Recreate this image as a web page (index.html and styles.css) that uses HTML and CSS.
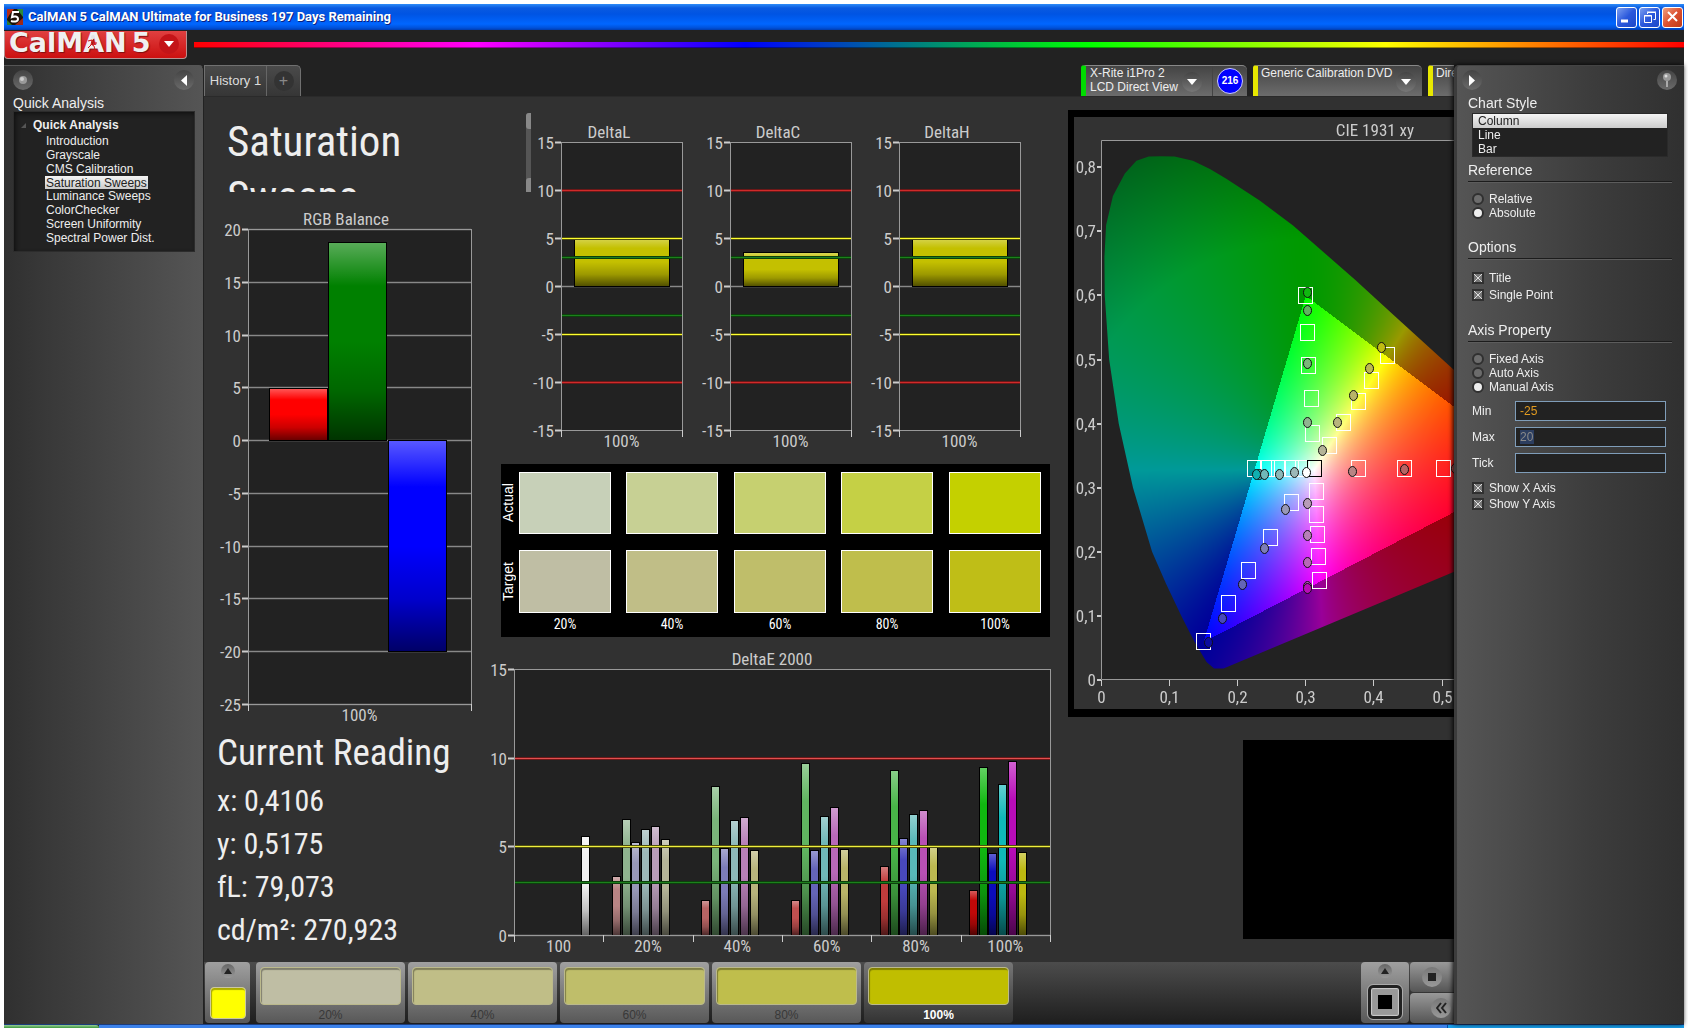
FILE: index.html
```html
<!DOCTYPE html>
<html lang="en">
<head>
<meta charset="utf-8">
<title>CalMAN 5</title>
<link rel="stylesheet" href="styles.css">
</head>
<body>
<div class="window">
  <header class="titlebar">
    <svg class="app-icon" width="16" height="16" viewBox="0 0 16 16" aria-hidden="true">
      <rect width="16" height="16" fill="#1c1208"/><path d="M0 0h7L3 5l-3 5z" fill="#b22a18"/><path d="M10 0h6v8z" fill="#2a8a3a"/><path d="M16 9v7H8z" fill="#a02818"/><path d="M0 11l5 5H0z" fill="#2f7a30"/>
      <path d="M12 3H6L5 8c2-1 6-1 6 2s-4 3-7 2" fill="none" stroke="#fff" stroke-width="2"/>
    </svg>
    <span class="titlebar-text">CalMAN 5 CalMAN Ultimate for Business 197 Days Remaining</span>
    <div class="window-buttons">
      <button class="wbtn" aria-label="Minimize"><svg width="20" height="20"><path d="M4 14h7" stroke="#fff" stroke-width="3"/></svg></button>
      <button class="wbtn" aria-label="Restore"><svg width="20" height="20" fill="none" stroke="#fff"><path d="M7.5 7V5.500h8v7h-2M7 5h9"/><path d="M4.500 8.500h7v7h-7zM4 9h8"/></svg></button>
      <button class="wbtn close" aria-label="Close"><svg width="20" height="20"><path d="M5 5l9 9M14 5l-9 9" stroke="#fff" stroke-width="2"/></svg></button>
    </div>
  </header>

  <div class="brandbar">
    <button class="logo" aria-label="CalMAN 5 menu">
      <span class="logo-word">CalMAN</span><span class="logo-word">5</span>
      <svg class="runner" width="14" height="18" viewBox="0 0 14 18" aria-hidden="true"><circle cx="8" cy="4" r="2" fill="#e4e4e4"/><path d="M3 8l4-1 2 3 3 0M7 7l-1 5-3 3M6 11l3 2 1 4" fill="none" stroke="#c8161a" stroke-width="1"/></svg>
      <span class="logo-drop"><svg width="10" height="6"><path d="M0 0h10L5 6z" fill="#fff"/></svg></span>
    </button>
    <div class="rainbow"></div>
  </div>

  <div class="body">
    <aside class="sidebar">
      <div class="side-tools">
        <button class="round" aria-label="Pin"><svg width="8" height="8"><circle cx="4" cy="4" r="4" fill="#999"/><circle cx="3" cy="3" r="2" fill="#ccc"/></svg></button>
        <button class="round" aria-label="Collapse"><svg width="6" height="11"><path d="M6 0v11L0 5.500z" fill="#fff"/></svg></button>
      </div>
      <h2 class="heading">Quick Analysis</h2>
      <nav class="tree">
        <div class="tree-root"><svg width="5" height="5"><path d="M5 0v5H0z" fill="#555"/></svg>Quick Analysis</div>
        <a href="#">Introduction</a>
        <a href="#">Grayscale</a>
        <a href="#">CMS Calibration</a>
        <a href="#" class="current">Saturation Sweeps</a>
        <a href="#">Luminance Sweeps</a>
        <a href="#">ColorChecker</a>
        <a href="#">Screen Uniformity</a>
        <a href="#">Spectral Power Dist.</a>
      </nav>
    </aside>

    <main class="main">
      <div class="tabs">
        <div class="history"><button class="history-tab">History 1</button><button class="history-add" aria-label="Add history"><span>+</span></button></div>
        <div class="devices">
          <div class="device meter"><span class="device-name">X-Rite i1Pro 2<br>LCD Direct View</span><button class="drop" aria-label="Meter menu"><svg width="10" height="6"><path d="M0 0h10L5 6z" fill="#fff"/></svg></button><span class="counter-cell"><span class="counter">216</span></span></div>
          <div class="device source"><span class="device-name">Generic Calibration DVD</span><button class="drop" aria-label="Source menu"><svg width="10" height="6"><path d="M0 0h10L5 6z" fill="#fff"/></svg></button></div>
          <div class="device display"><span class="device-name">Direct Display Control</span></div>
        </div>
      </div>

      <div class="stage">
        <section class="col-left">
          <div class="title-box"><h1>Saturation Sweeps</h1><span class="mini-scroll"><i></i><i></i></span></div>
          <svg class="chart" id="rgb" width="285" height="520" role="img" aria-label="RGB Balance"></svg>
          <div class="reading">
            <h2>Current Reading</h2>
            <p>x: 0,4106</p><p>y: 0,5175</p><p>fL: 79,073</p><p>cd/m²: 270,923</p>
          </div>
        </section>
        <section class="col-mid">
          <div class="deltas">
            <svg class="chart" id="dl" width="169" height="365" role="img" aria-label="DeltaL"></svg>
            <svg class="chart" id="dc" width="169" height="365" role="img" aria-label="DeltaC"></svg>
            <svg class="chart" id="dh" width="169" height="365" role="img" aria-label="DeltaH"></svg>
          </div>
          <div class="swatches">
            <span class="side-label">Actual</span><i class="sw a20"></i><i class="sw a40"></i><i class="sw a60"></i><i class="sw a80"></i><i class="sw a100"></i>
            <span class="side-label">Target</span><i class="sw t20"></i><i class="sw t40"></i><i class="sw t60"></i><i class="sw t80"></i><i class="sw t100"></i>
            <span></span><b>20%</b><b>40%</b><b>60%</b><b>80%</b><b>100%</b>
          </div>
          <svg class="chart" id="de" width="565" height="315" role="img" aria-label="DeltaE 2000"></svg>
        </section>
        <section class="col-right">
          <div class="cie">
            <canvas id="gamut" width="585" height="592"></canvas>
            <svg class="chart" id="cie" width="585" height="592" role="img" aria-label="CIE 1931 xy"></svg>
          </div>
          <div class="preview"></div>
        </section>
      </div>

      <footer class="pattern-bar">
        <div class="card pick"><button class="up" aria-label="Expand"><svg width="8" height="6"><path d="M0 6h8L4 0z" fill="#222"/></svg></button><button class="yellow" aria-label="Current color"></button></div>
        <button class="card level"><i class="t20"></i>20%</button>
        <button class="card level"><i class="t40"></i>40%</button>
        <button class="card level"><i class="t60"></i>60%</button>
        <button class="card level"><i class="t80"></i>80%</button>
        <button class="card level active"><i class="full"></i>100%</button>
        <div class="card window-size"><button class="up" aria-label="Expand"><svg width="8" height="6"><path d="M0 6h8L4 0z" fill="#222"/></svg></button><button class="pattern" aria-label="Window pattern"><i></i></button></div>
        <div class="transport">
          <button class="key" aria-label="Stop"><span><svg width="8" height="8"><rect width="8" height="8" fill="#222"/></svg></span></button>
          <button class="key back" aria-label="Back"><span><svg width="11" height="12" fill="none" stroke="#222" stroke-width="2"><path d="M5 1L1 6l4 5M10 1L6 6l4 5"/></svg></span></button>
        </div>
      </footer>
    </main>

    <aside class="props">
      <div class="side-tools">
        <button class="round" aria-label="Collapse"><svg width="6" height="11"><path d="M0 0v11l6-5.500z" fill="#fff"/></svg></button>
        <button class="round" aria-label="Pin"><svg width="8" height="15"><circle cx="4" cy="4" r="4" fill="#999"/><circle cx="3" cy="3" r="1.500" fill="#ddd"/><path d="M4 8v6" stroke="#aaa" stroke-width="2"/></svg></button>
      </div>
      <label class="heading" for="style">Chart Style</label>
      <select id="style" size="3"><option selected>Column</option><option>Line</option><option>Bar</option></select>
      <fieldset class="g-ref"><legend class="heading">Reference</legend>
        <label><input type="radio" name="ref">Relative</label>
        <label><input type="radio" name="ref" checked>Absolute</label>
      </fieldset>
      <fieldset class="g-opt"><legend class="heading">Options</legend>
        <label><input type="checkbox" checked>Title</label>
        <label><input type="checkbox" checked>Single Point</label>
      </fieldset>
      <fieldset class="g-axis"><legend class="heading">Axis Property</legend>
        <label><input type="radio" name="axis">Fixed Axis</label>
        <label><input type="radio" name="axis">Auto Axis</label>
        <label><input type="radio" name="axis" checked>Manual Axis</label>
      </fieldset>
      <div class="fields">
        <label for="min">Min</label><input id="min" class="amber" type="text" value="-25">
        <label for="max">Max</label><span class="field"><input id="max" class="picked" type="text" value="20" size="1"></span>
        <label for="tick">Tick</label><input id="tick" type="text">
      </div>
      <div class="checks">
        <label><input type="checkbox" checked>Show X Axis</label>
        <label><input type="checkbox" checked>Show Y Axis</label>
      </div>
    </aside>
  </div>
  <div class="taskbar"><i class="start"></i><i class="tasks"></i><i class="tray"></i></div>
</div>
<script src="charts.js"></script>
</body>
</html>
```
FILE: styles.css
```css
* { box-sizing: border-box; }
body { margin: 0; padding: 4px 4px 0; background: #fff; font: 12px/14px "Liberation Sans", Arial, sans-serif; color: #eee; }
button { border: 0; padding: 0; margin: 0; background: none; color: inherit; font: inherit; display: flex; align-items: center; justify-content: center; }
h1, h2, p, fieldset, legend { margin: 0; padding: 0; border: 0; font-weight: normal; }
svg, canvas { display: block; }
i { display: block; }

.window { display: flex; flex-direction: column; min-height: calc(100vh - 4px); background: #222; }

.titlebar { display: flex; align-items: center; gap: 5px; height: 26px; padding: 0 1px 0 3px; background: linear-gradient(#2d8cf8 0, #0a5ae0 4px, #0054e3 10px, #0066ff 20px, #0050d8 24px, #003cae); }
.titlebar-text { font: bold 13px/18px Roboto, sans-serif; color: #fff; text-shadow: 1px 1px 0 #0a1f80; }
.window-buttons { display: flex; gap: 2px; margin-left: auto; }
.wbtn { width: 21px; height: 21px; border: 1px solid #fff; border-radius: 3px; background: linear-gradient(135deg, #7c9ff0, #2a58dc 50%, #1c48c8); }
.wbtn.close { background: linear-gradient(135deg, #f0a080, #dc5030 50%, #c03a18); }

.brandbar { display: flex; align-items: flex-start; gap: 7px; height: 35px; padding-top: 1px; }
.logo { position: relative; width: 183px; height: 28px; padding-left: 4px; gap: 5px; justify-content: flex-start; align-items: flex-start; border: 1px solid #b89090; border-width: 0 1px 1px; border-radius: 0 0 4px 4px; background: linear-gradient(#e04040, #cc1010); overflow: hidden; }
.logo-word { font: bold 27px/24px "DejaVu Sans", sans-serif; color: #f0f0f0; text-shadow: 1px 1px 1px #801010; }
.runner { position: absolute; left: 80px; top: 2px; }
.logo-drop { display: flex; align-items: center; justify-content: center; width: 20px; height: 20px; margin: 3px 0 0 4px; border-radius: 50%; background: #c41418; }
.rainbow { flex: 1; height: 6px; margin-top: 11px; background: linear-gradient(90deg, #f00, #f0f 19%, #00f 37%, #0f0 60%, #ff0 80%, #f00); border-bottom: 1px solid #0006; }

.body { flex: 1; display: flex; min-width: 0; }

.sidebar { width: 200px; padding: 4px 9px 0 9px; border-right: 1px solid #222; border-top: 1px solid #555; border-radius: 0 5px 0 0; background: linear-gradient(90deg, #303030, #383838 20%, #555); }
.side-tools { display: flex; justify-content: space-between; height: 20px; }
.round { width: 20px; height: 20px; border-radius: 50%; background: linear-gradient(#444, #6a6a6a); }
.heading { display: block; font-size: 14px; line-height: 16px; color: #eee; }
.sidebar .heading { margin-top: 5px; }
.tree { display: flex; flex-direction: column; align-items: flex-start; width: 182px; height: 141px; padding-top: 5px; background: #222; border: 1px solid #2c2c2c; box-shadow: inset 2px 2px 4px #111; }
.tree-root { display: flex; align-items: center; gap: 7px; padding-left: 7px; height: 16px; margin-bottom: 1px; font-weight: bold; }
.tree a { margin-left: 31px; padding: 0 1px; line-height: 14px; color: #eee; text-decoration: none; }
.tree a.current { color: #222; background: linear-gradient(#f4f4f4, #ccc); height: 13px; }

.main { flex: 1; min-width: 0; display: flex; flex-direction: column; background: #313131; overflow: hidden; }
.tabs { display: flex; justify-content: space-between; height: 32px; background: #222; border-bottom: 1px solid #2a2a2a; }
.history { display: flex; width: 97px; border: 1px solid #707070; border-bottom: 0; border-radius: 0 5px 0 0; background: linear-gradient(#4a4a4a, #363636); }
.history-tab { width: 61px; font-size: 13px; color: #ddd; }
.history-add { flex: 1; border-left: 1px solid #666; }
.history-add span { width: 20px; height: 20px; border-radius: 50%; background: #333; color: #888; font-size: 16px; line-height: 20px; }
.devices { display: flex; gap: 6px; width: 373px; overflow: hidden; }
.device { display: flex; flex: none; height: 31px; border-top: 1px solid #888; border-left: 5px solid #e8e800; border-radius: 3px 5px 0 0; padding-left: 3px; background: linear-gradient(#444, #6c6c6c); white-space: nowrap; }
.device.meter { width: 166px; padding-left: 4px; border-left-color: #0d0; }
.device.source { width: 169px; }
.device.display { width: 200px; }
.device-name { flex: 1; }
.drop { width: 20px; height: 20px; margin: 6px 6px 0 0; border-radius: 50%; background: linear-gradient(#444, #777); }
.meter .drop { margin-right: 10px; }
.counter-cell { display: flex; align-items: center; justify-content: center; width: 35px; border-left: 1px solid #444; }
.counter { width: 26px; height: 26px; border: 1px solid #ccf; border-radius: 50%; background: #00f; color: #fff; font: bold 10px/24px "Liberation Sans", sans-serif; text-align: center; }

.stage { flex: 1; display: grid; grid-template-columns: 285px 564px 1fr; min-width: 0; font-family: "Roboto Condensed", "Liberation Sans", sans-serif; overflow: hidden; }
.col-left, .col-mid, .col-right { display: flex; flex-direction: column; min-width: 0; }
.title-box { display: flex; justify-content: space-between; width: 327px; height: 95px; padding-left: 23px; margin-bottom: 13px; overflow: hidden; }
.title-box h1 { width: 240px; padding-top: 17px; font-size: 43px; line-height: 55px; }
.mini-scroll { display: flex; flex-direction: column; justify-content: space-between; width: 5px; height: 81px; margin-top: 16px; background: #555; border-radius: 3px 0 0 3px; }
.mini-scroll i { height: 16px; border-radius: 3px 0 0 3px; background: #888; }
.reading { padding: 8px 0 0 13px; }
.reading h2 { font-size: 37px; line-height: 40px; margin-bottom: 6px; }
.reading p { font-size: 30px; line-height: 43px; white-space: nowrap; }
.deltas { display: flex; padding-left: 41px; margin-bottom: 2px; }
.swatches { display: grid; grid-template-columns: 18px 107px 108px 107px 108px 92px; grid-template-rows: 62px 63px 16px; row-gap: 16px; width: 549px; height: 173px; margin: 0 0 8px 12px; padding-top: 8px; background: #000; }
.sw { width: 92px; border: 1px solid #fff; }
.side-label { writing-mode: vertical-rl; transform: rotate(180deg); text-align: center; font: 14px/14px "Liberation Sans", sans-serif; color: #fff; }
.swatches b { width: 92px; margin-top: -13px; font-weight: 400; font-size: 14px; line-height: 16px; text-align: center; color: #fff; }
.a20 { background: #c7d0b8; } .a40 { background: #c7d094; } .a60 { background: #c6d070; } .a80 { background: #c5d045; } .a100 { background: #c4d000; }
.t20 { background: #bfbea4; } .t40 { background: #c0be87; } .t60 { background: #bfbe6a; } .t80 { background: #bfbe4c; } .t100 { background: #bfbe17; }
.full { background: #c0be00; }
.col-right { padding: 13px 0 0 15px; overflow: hidden; }
.cie { display: grid; border: 7px solid #000; border-width: 7px 0 8px 6px; overflow: hidden; background: #323232; }
.cie > * { grid-area: 1 / 1; }
.preview { height: 199px; margin: 23px 0 0 175px; background: #000; }

.chart text { font-size: 17px; fill: #ccc; }

.pattern-bar { display: flex; gap: 3px; height: 62px; padding: 0 0 1px 1px; background: linear-gradient(#4c4c4c, #1e1e1e); }
.card { border-radius: 4px; background: linear-gradient(#a0a0a0, #7c7c7c 50%, #585858); }
.pick { display: flex; flex-direction: column; align-items: center; width: 45px; margin-right: 3px; }
.up { width: 14px; height: 14px; margin-top: 2px; border-radius: 50%; background: linear-gradient(#666, #999); flex: none; }
.yellow { width: 36px; height: 32px; margin-top: 9px; border: 1px solid #ccc8a0; border-radius: 4px; background: #ff0; box-shadow: inset 1px 2px 1px #aa0; }
.level { flex-direction: column; justify-content: flex-start; gap: 2px; width: 149px; padding-top: 5px; color: #383838; line-height: 16px; }
.level i { width: 141px; height: 38px; border: 1px solid #bbb98c; border-radius: 4px; box-shadow: inset 1px 2px 1px #0005; }
.level.active { color: #fff; font-weight: bold; background: linear-gradient(#777, #333); }
.window-size { display: flex; flex-direction: column; align-items: center; width: 48px; margin-left: auto; }
.pattern { width: 34px; height: 34px; margin-top: 7px; border: 3px solid #222; border-radius: 5px; outline: 1px solid #aaa; background: #999; box-shadow: inset 0 0 1px 1px #ccc; }
.pattern i { width: 14px; height: 14px; background: #000; }
.transport { display: flex; flex-direction: column; gap: 1px; width: 44px; margin-left: -2px; }
.key { flex: 1; border-radius: 4px 0 0 4px; background: linear-gradient(#999, #555); }
.key span { display: flex; align-items: center; justify-content: center; width: 20px; height: 20px; border-radius: 50%; background: linear-gradient(#777, #999); }
.key.back { justify-content: flex-end; padding-right: 3px; }

.props { position: relative; width: 230px; padding: 4px 9px 0 11px; border-left: 3px solid #3c3c3c; border-top: 1px solid #444; border-radius: 5px 0 0 0; background: linear-gradient(90deg, #555, #3c3c3c 60%, #303030); box-shadow: -1px 0 5px #000; }
.props .side-tools { margin-left: -6px; margin-right: -2px; }
.props > .heading { margin-top: 5px; }
select { display: block; width: 196px; height: 44px; margin: 2px 0 0 4px; padding: 0; border: 1px solid #2a2a2a; border-radius: 0; background: #222; color: #eee; font: inherit; overflow: hidden; outline: 0; }
option { padding: 0 5px; height: 14px; min-height: 14px; line-height: 14px; }
option:checked { background: linear-gradient(#f4f4f4, #ccc); color: #222; }
legend.heading { width: 204px; height: 20px; border-bottom: 1px solid #1c1c1c; box-shadow: 0 1px #5c5c5c; }
fieldset { display: flex; flex-direction: column; }
.props label:not(.heading) { display: flex; align-items: center; gap: 5px; padding-left: 4px; }
.props input { margin: 0; }
.g-ref { margin-top: 5px; }
.g-ref legend { margin-bottom: 10px; }
.g-opt { gap: 3px; margin-top: 19px; }
.g-opt legend { margin-bottom: 12px; }
.g-axis { margin-top: 20px; }
.g-axis legend { margin-bottom: 10px; }
input[type=radio], input[type=checkbox] { appearance: none; width: 12px; height: 12px; border: 2px solid #303030; background: #6c6c6c; }
input[type=radio] { border-radius: 50%; }
input[type=radio]:checked { background: #eee; }
input[type=checkbox] { background: linear-gradient(45deg, #0000 44%, #ddd 46% 54%, #0000 56%), linear-gradient(135deg, #777 44%, #ddd 46% 54%, #777 56%); }
.fields { display: grid; grid-template-columns: 47px 151px; row-gap: 6px; margin-top: 7px; }
.fields > input, .field { width: 151px; height: 20px; padding: 0 4px; border: 1px solid #7f9db9; background: #222; color: #eee; font: inherit; outline: 0; }
.fields .amber { color: #e09a20; }
.field { display: flex; align-items: center; }
.field .picked { width: 14px; height: 14px; padding: 0; border: 0; background: #2c3e60; color: #8a8a8a; font: inherit; outline: 0; }
.checks { display: flex; flex-direction: column; gap: 2px; margin-top: 8px; }

.taskbar { display: flex; height: 4px; border-top: 1px solid #1c3c7c; }
.start { width: 95px; background: linear-gradient(#9c9, #3c9a3c); border-radius: 0 3px 0 0; }
.tasks { flex: 1; background: #3c82ea; }
.tray { width: 237px; background: #18a0ee; border-left: 1px solid #0a50a0; }
```
FILE: charts.js
```js
const NS = 'http://www.w3.org/2000/svg';

function add(parent, tag, attrs, text) {
  const node = document.createElementNS(NS, tag);
  for (const key in attrs) node.setAttribute(key, attrs[key]);
  if (text !== undefined) node.textContent = text;
  parent.appendChild(node);
  return node;
}

function line(svg, x1, y1, x2, y2, stroke, width = 1) {
  add(svg, 'line', { x1, y1, x2, y2, stroke, 'stroke-width': width });
}

/* Column chart: plot = [left, top, right, bottom], range = [min, max] */
function columnChart(id, o) {
  const svg = document.getElementById(id);
  const [l, t, r, b] = o.plot;
  const [min, max] = o.range;
  const y = v => Math.round(b - (v - min) / (max - min) * (b - t)) + 0.5;
  const gridLine = v => {
    line(svg, l, y(v), r, y(v), '#505050', 2);
    line(svg, l, y(v), r, y(v), '#888');
  };

  const grad = add(add(svg, 'defs', {}), 'linearGradient', { id: id + '-shade', x2: 0, y2: 1 });
  [[0, '#fff', 0.35], [0.22, '#fff', 0], [0.5, '#000', 0], [0.75, '#000', 0.2], [1, '#000', 0.6]]
    .forEach(([offset, c, a]) => add(grad, 'stop', { offset, 'stop-color': c, 'stop-opacity': a }));

  add(svg, 'rect', { x: l, y: t, width: r - l, height: b - t, fill: '#222' });
  add(svg, 'text', { x: o.titleX, y: o.titleY, 'text-anchor': 'middle' }, o.title);
  for (let v = min; v <= max; v += 5) {
    if (o.grid) gridLine(v);
    line(svg, l - 6, y(v), l, y(v), '#ccc', 2);
    add(svg, 'text', { x: l - 7, y: y(v) + 6, 'text-anchor': 'end' }, v);
  }
  if (!o.grid) gridLine(0);
  o.bars.forEach(([x, w, v, color]) => {
    const top = Math.min(y(v), y(0)), h = Math.abs(y(v) - y(0));
    for (const fill of [color, `url(#${id}-shade)`])
      add(svg, 'rect', { x: x + 0.5, y: top, width: w, height: h, fill, stroke: '#000' });
  });
  (o.limits || []).forEach(([v, dark, bright]) => {
    line(svg, l, y(v), r, y(v), dark, 3);
    line(svg, l, y(v), r, y(v), bright, 1);
  });
  add(svg, 'rect', { x: l + 0.5, y: t + 0.5, width: r - l, height: b - t, fill: 'none', stroke: '#999', 'stroke-width': 1 });
  const step = (r - l) / o.labels.length;
  for (let i = 0; i <= o.labels.length; i++) line(svg, Math.round(l + i * step) + 0.5, b, Math.round(l + i * step) + 0.5, b + 7, '#ccc');
  o.labels.forEach((text, i) => add(svg, 'text', { x: l + (i + 0.5) * step, y: b + 17, 'text-anchor': 'middle' }, text));
}

columnChart('rgb', {
  title: 'RGB Balance', titleX: 142, titleY: 20, plot: [44, 24, 267, 499], range: [-25, 20], grid: true, labels: ['100%'],
  bars: [[65, 58, 4.9, '#f00'], [124, 58, 18.8, '#008000'], [184, 58, -20, '#00f']]
});

const red = '#6c1818', redHi = '#d02a2a', yel = '#505010', yelHi = '#ffff30', grn = '#0c400c', grnHi = '#1c801c';
[['dl', 'DeltaL', 5.1], ['dc', 'DeltaC', 3.5], ['dh', 'DeltaH', 5.1]].forEach(([id, title, v]) =>
  columnChart(id, {
    title, titleX: 79, titleY: 41, plot: [31, 45, 152, 333], range: [-15, 15], labels: ['100%'],
    bars: [[44, 95, v, '#c4c000']],
    limits: [[10, red, redHi], [5, yel, yelHi], [3, grn, grnHi], [-3, grn, grnHi], [-5, yel, yelHi], [-10, red, redHi]]
  }));

const sweeps = [
  [123, [3.35, 6.55, 5.25, 5.98, 6.15, 5.42], ['#b88484', '#90b490', '#9898b8', '#9cb8b8', '#b89cb8', '#b4b498']],
  [212, [1.98, 8.42, 4.9, 6.48, 6.65, 4.82], ['#b86464', '#7ab47a', '#7c7cb8', '#8cb8b8', '#b880b8', '#b8b47c']],
  [302, [2.0, 9.7, 4.82, 6.72, 7.22, 4.85], ['#c05050', '#60b460', '#6464b8', '#70b8b8', '#b868b8', '#b8b468']],
  [391, [3.88, 9.3, 5.48, 6.83, 7.05, 5.0], ['#c03c3c', '#48b448', '#4848bc', '#58b8b8', '#b850b4', '#bcb850']],
  [480, [2.55, 9.5, 4.62, 8.52, 9.82, 4.68], ['#c00808', '#10b810', '#0c0cbc', '#10b8b8', '#b80cb8', '#bcb810']]
];
const bars = [[92, 8, 5.6, '#f0f0f0']];
sweeps.forEach(([x, values, colors]) => values.forEach((v, i) => bars.push([x + Math.round(i * 9.7), 8, v, colors[i]])));
columnChart('de', {
  title: 'DeltaE 2000', titleX: 283, titleY: 20, plot: [25, 24, 561, 290], range: [0, 15],
  labels: ['100', '20%', '40%', '60%', '80%', '100%'], bars,
  limits: [[10, red, '#e05050'], [5, yel, '#eeee40'], [3, grn, grnHi]]
});

/* CIE 1931 diagram, in pixels of the 585 x 592 drawing */
const X = x => 27 + x * 681, Y = y => 563 - y * 641;
const locus = [[.180, .018], [.166, .018], [.155, .028], [.137, .06], [.118, .1], [.0955, .15], [.075, .2], [.047, .3], [.026, .4], [.012, .5],
  [.0055, .6], [.005, .66], [.0075, .71], [.0175, .755], [.035, .79], [.052, .81], [.07, .8165], [.088, .817], [.108, .8165], [.135, .81], [.16, .797],
  [.184, .782], [.233, .748], [.282, .709], [.3731, .6245], [.43, .569], [.518, .484], [.6, .4], [.7347, .2653]];
const white = [.3127, .329], tri = [[.64, .33], [.30, .60], [.15, .06]];

function rgbAt(x, y) {
  const a = x / y, c = (1 - x - y) / y;
  const v = [3.2406 * a - 1.5372 - .4986 * c, -.9689 * a + 1.8758 + .0415 * c, .0557 * a - .204 + 1.057 * c].map(n => Math.max(n, 0));
  const m = Math.max(...v);
  return v.map(n => n / m);
}

/* Factor that carries (x, y) along the ray from white to the triangle edge; below 1 is outside */
function edgeFactor(x, y) {
  const dx = x - white[0], dy = y - white[1];
  let best = Infinity;
  for (let i = 0; i < 3; i++) {
    const [ax, ay] = tri[i], [bx, by] = tri[(i + 1) % 3];
    const ex = bx - ax, ey = by - ay, d = dx * ey - dy * ex;
    const s = ((ax - white[0]) * ey - (ay - white[1]) * ex) / d;
    if (s > 0 && s < best) best = s;
  }
  return best;
}

const canvas = document.getElementById('gamut'), ctx = canvas.getContext('2d');
const off = document.createElement('canvas');
off.width = canvas.width; off.height = canvas.height;
const octx = off.getContext('2d'), img = octx.createImageData(off.width, off.height);
for (let py = 0; py < off.height; py++) for (let px = 0; px < off.width; px++) {
  const x = (px - 27) / 681, y = Math.max((563 - py) / 641, .001), s = edgeFactor(x, y);
  let c;
  if (s >= 1) c = rgbAt(x, y).map(n => n * 255);
  else {
    const far = Math.hypot(x - white[0], y - white[1]);
    const k = .6 - Math.max(0, far - .36) * 1.1;
    c = rgbAt(white[0] + (x - white[0]) * s, white[1] + (y - white[1]) * s).map(n => Math.pow(n, 1.6) * 255 * k);
  }
  img.data.set([...c, 255], (py * off.width + px) * 4);
}
octx.putImageData(img, 0, 0);
ctx.fillStyle = '#222';
ctx.fillRect(27, 24, 545, 539);
ctx.beginPath();
locus.forEach(([x, y], i) => ctx[i ? 'lineTo' : 'moveTo'](X(x), Y(y)));
ctx.closePath();
ctx.save(); ctx.clip(); ctx.drawImage(off, 0, 0); ctx.restore();

const cie = document.getElementById('cie');
add(cie, 'text', { x: 301, y: 19, 'text-anchor': 'middle' }, 'CIE 1931 xy');
add(cie, 'path', { d: 'M572 23.500H27.500V562.500H572', fill: 'none', stroke: '#999' });
for (let i = 0; i <= 8; i++) {
  const label = i ? '0,' + i : '0';
  const ty = Math.round(Y(i / 10)), tx = Math.round(X(i / 10)) + .5;
  line(cie, 23, ty, 27, ty, '#ccc', 2);
  add(cie, 'text', { x: 22, y: ty + 6, 'text-anchor': 'end' }, label);
  line(cie, tx, 563, tx, 569, '#ccc');
  add(cie, 'text', { x: tx, y: 586, 'text-anchor': 'middle' }, label);
}
const targets = [[231, 178], [233, 215], [234, 248], [237, 281], [238, 316], [313, 238], [297, 263], [284, 284], [269, 305], [255, 328],
  [180, 351], [193, 351], [204, 351], [217, 351], [228, 351], [284, 351], [330, 351], [369, 351],
  [242, 374], [242, 397], [243, 417], [244, 439], [245, 463], [217, 385], [196, 420], [174, 453], [154, 486], [129, 524]];
targets.forEach(([x, y]) => add(cie, 'rect', { x: x - 6.5, y: y - 7.5, width: 14, height: 16, fill: 'none', stroke: '#fff' }));
add(cie, 'rect', { x: 233.5, y: 343.5, width: 14, height: 16, fill: 'none', stroke: '#000', 'stroke-width': 1 });
const measured = [[233, 193, '#60b460'], [233, 175, '#10b810'], [233, 246, '#7ab47a'], [233, 305, '#90b490'], [307, 230, '#c0bc10'], [295, 251, '#bcb850'],
  [279, 278, '#b8b468'], [263, 305, '#b8b47c'], [248, 333, '#b4b498'], [185, 357, '#50b0b0'], [182, 357, '#10b0b0'], [190, 357, '#70b8b8'], [205, 357, '#8cb8b8'],
  [220, 355, '#9cb8b8'], [232, 355, '#fff'], [278, 354, '#b88484'], [330, 352, '#b86464'], [381, 351, '#c05050'], [233, 386, '#b89cb8'], [233, 418, '#b880b8'],
  [233, 445, '#b868b8'], [233, 469, '#b850b4'], [233, 471, '#b80cb8'], [211, 392, '#9898b8'], [190, 431, '#7c7cb8'], [168, 467, '#6464b8'], [148, 501, '#4848bc'], [134, 525, '#0c0ca0']];
measured.forEach(([cx, cy, fill]) => add(cie, 'ellipse', { cx: cx + .5, cy: cy + .5, rx: 4, ry: 5, fill, stroke: '#111' }));
```
